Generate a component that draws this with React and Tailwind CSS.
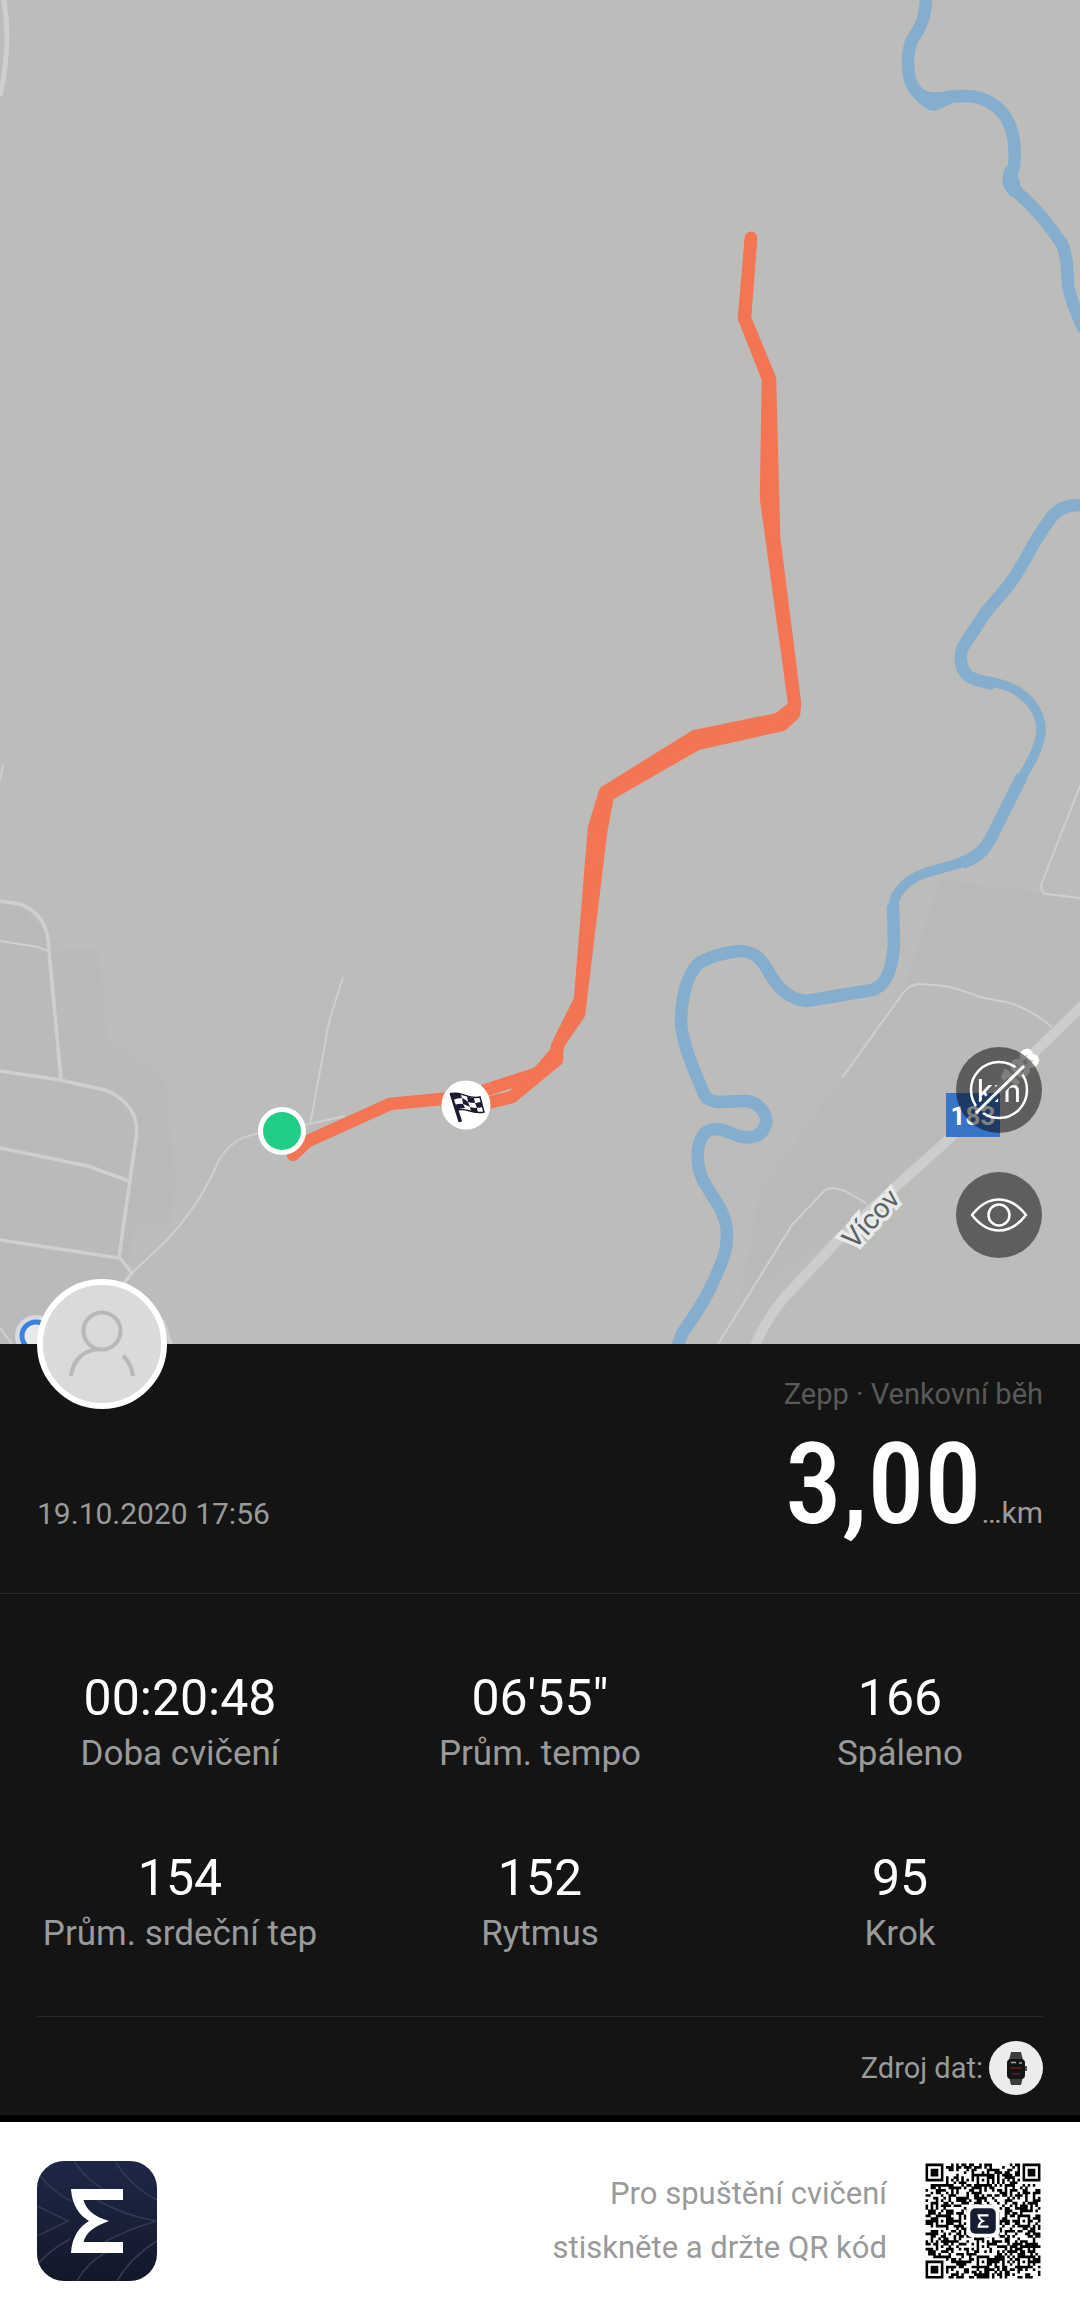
import React from "react";

const stats = [
  { value: "00:20:48", label: "Doba cvičení" },
  { value: "06'55\"", label: "Prům. tempo" },
  { value: "166", label: "Spáleno" },
  { value: "154", label: "Prům. srdeční tep" },
  { value: "152", label: "Rytmus" },
  { value: "95", label: "Krok" },
];

const QR_SIZE = 45;

// Builds the modules of a 45 × 45 code: finders, alignment marks, timing rows and data.
function buildQr() {
  const grid = [];
  let seed = 20201019;
  for (let y = 0; y < QR_SIZE; y++) {
    const row = [];
    for (let x = 0; x < QR_SIZE; x++) {
      seed = (seed * 1103515245 + 12345) % 2147483648;
      row.push((seed >> 16) % 100 < 53);
    }
    grid.push(row);
  }
  for (let i = 8; i < QR_SIZE - 8; i++) {
    grid[6][i] = i % 2 === 0;
    grid[i][6] = i % 2 === 0;
  }
  const ring = (cx, cy, r, lightRings) => {
    for (let y = cy - r; y <= cy + r; y++) {
      for (let x = cx - r; x <= cx + r; x++) {
        if (x < 0 || y < 0 || x >= QR_SIZE || y >= QR_SIZE) continue;
        const d = Math.max(Math.abs(x - cx), Math.abs(y - cy));
        grid[y][x] = !lightRings.includes(d);
      }
    }
  };
  ring(3, 3, 4, [2, 4]);
  ring(QR_SIZE - 4, 3, 4, [2, 4]);
  ring(3, QR_SIZE - 4, 4, [2, 4]);
  [[6, 22], [22, 6], [38, 22], [22, 38], [38, 38]].forEach(([x, y]) => ring(x, y, 2, [1]));
  // Neighbouring dark modules of a row are joined into one bar.
  let d = "";
  grid.forEach((row, y) => {
    let x = 0;
    while (x < QR_SIZE) {
      if (!row[x]) {
        x++;
        continue;
      }
      let end = x;
      while (end < QR_SIZE && row[end]) end++;
      d += `M${x} ${y}H${end}V${y + 1.05}H${x}Z`;
      x = end;
    }
  });
  return d;
}

const qrPath = buildQr();

const SIGMA =
  "M34 28H86V39H46.500C49 49 58 56 72 60C58 65 49 71 46.500 81H86V92H34C35 76 42 66 52 60C42 54 35 44 34 28Z";

function MapView() {
  return (
    <svg viewBox="0 0 1080 1344" className="block w-full bg-[#bcbcbb]" role="img" aria-label="Mapa trasy">
      <g fill="#bababa">
        <path d="M0 905L20 906L44 930L50 950L98 948L108 1040L165 1078L175 1180L170 1225L135 1222L115 1344H0Z" />
        <path d="M940 880L1080 898V1000L1040 1040L950 1130L840 1230L740 1300L760 1190L842 1078L903 993Z" />
      </g>
      <g fill="none" stroke="#cfcfcf" strokeWidth="3.500" strokeLinejoin="round">
        <path d="M4 0C9 30 8 60 0 96" strokeWidth="5" />
        <path d="M0 901L20 904C36 910 46 922 48 940L61 1080" />
        <path d="M0 941L38 947L47 951" strokeWidth="2" />
        <path d="M0 1071L60 1080L105 1090C126 1098 140 1115 136 1138L119 1257L132 1273L123 1284" />
        <path d="M0 1148L88 1166L129 1181M0 1240L119 1258" />
        <path d="M132 1273L165 1242C190 1216 208 1186 219 1160C230 1142 244 1135 262 1133" strokeWidth="2" />
        <path d="M343 977L329 1022L310 1125M300 1126L345 1116" strokeWidth="2" />
        <path d="M3 765L0 780M0 1328L12 1344" strokeWidth="2" />
        <path d="M163 1320L171 1344" />
        <path d="M1080 786L1041 885Q1041 893 1046 894L1080 898" strokeWidth="2" />
        <path d="M842 1078L903 993Q910 984 920 984L945 986Q960 989 980 997L1010 1003Q1032 1010 1052 1027" strokeWidth="2" />
        <path d="M718 1344L792 1225L825 1190Q832 1186 845 1191L866 1203" strokeWidth="2" />
        <path d="M1084 1004L1040 1047L948 1140L892 1190L840 1238L784 1298Q764 1322 754 1348" stroke="#cdcdcd" strokeWidth="10" />
      </g>

      <g fill="none" stroke="#85adce" strokeWidth="12.500" strokeLinejoin="round">
        <path d="M926 -4C926 18 920 28 912 40C907 52 907 66 910 80C916 98 930 101 948 97C976 94 988 98 1002 112C1014 126 1016 148 1014 166C1010 176 1011 186 1019 194C1036 208 1048 224 1062 244C1068 258 1067 272 1068 286Q1072 304 1084 330" />
        <path d="M1084 505C1064 504 1056 510 1048 522C1030 546 1024 566 1008 586L986 612L963 647C959 656 960 668 968 676C978 682 986 682 994 684" />
        <path d="M980 681C1000 682 1014 688 1020 693C1036 704 1044 722 1040 738C1036 758 1024 772 1018 784" strokeWidth="9.500" />
        <path d="M1022 776L998 824C986 850 980 856 962 863" />
        <path d="M968 860C940 870 920 872 908 882C896 892 893 900 893 912" strokeWidth="10" />
        <path d="M893 905L894 945C892 970 886 986 872 990L806 1001C790 999 780 990 771 976C762 958 754 951 738 951C718 954 706 958 698 964C686 976 681 1000 681 1024C684 1050 696 1074 704 1094C710 1106 726 1101 745 1101C758 1101 768 1114 766 1124C762 1138 750 1139 738 1136C720 1128 712 1126 704 1134C696 1144 696 1164 702 1178C712 1198 722 1206 726 1224C730 1246 722 1262 714 1280C704 1304 692 1318 682 1334L676 1350" />
      </g>
      <path d="M906 72L914 98Q924 110 934 111Q944 108 952 103L962 97L925 92Z" fill="#85adce" />
      <path d="M1006 166Q1000 178 1004 188L1010 196L1020 198L1020 180Z" fill="#85adce" />

      <g fill="none" stroke="#f37554" strokeWidth="12.500" strokeLinejoin="round" strokeLinecap="round">
        <path d="M751 238L744 318L768 379L766 498L794 702L794 707L778 719L695 736L605 792L594 828L580 1000L560 1040L556 1052L538 1073L486 1090L462 1097L390 1104L308 1141L293 1155" />
        <path d="M751 238L745 318L770 379L774 537L795 704L794 714L782 725L697 744L608 795L601 832L579 1014L557 1046L557 1060L512 1097L466 1108" />
      </g>
      <path d="M600 797L592 830L575 1004L584 1012L604 830L609 797Z M695 734L778 717L782 727L698 746Z" fill="#f37554" />

      <circle cx="282" cy="1131" r="24" fill="#fff" />
      <circle cx="282" cy="1131" r="19" fill="#20cf85" />

      <circle cx="466" cy="1105" r="24.500" fill="#fff" />
      <g>
        <path d="M450 1093.500L452.500 1093L461.500 1121L459 1122Z" fill="#1b1b30" stroke="#1b1b30" strokeWidth="1" />
        <path d="M451 1094C460 1090 468 1100 480 1097L484 1112C474 1115 466 1107 457 1110Z" fill="#fff" stroke="#1b1b30" strokeWidth="1.500" />
        <path d="M451 1094Q456 1092 460 1093L462 1098Q457 1098 453 1100ZM467 1096Q472 1098 474 1098L475 1103Q471 1103 468 1102ZM462 1098Q465 1099 468 1102L470 1107Q466 1105 463 1104ZM475 1103L481 1102L483 1107L477 1108ZM455 1105Q459 1103 463 1104L465 1108Q460 1108 457 1110ZM470 1107Q473 1108 477 1108L478 1113Q474 1112 471 1111Z" fill="#1b1b30" />
      </g>

      <circle cx="36" cy="1336" r="21" fill="#d7dadf" />
      <circle cx="36" cy="1336" r="14" fill="#e9e9e9" stroke="#3d80e2" strokeWidth="5" />

      <g fontFamily="Roboto, sans-serif">
        <rect x="946" y="1093" width="54" height="44" fill="#3874c8" />
        <text x="973" y="1125" textAnchor="middle" fontSize="26" fontWeight="700" fill="#fff">183</text>
        <text
          transform="translate(1026 1074) rotate(-46)"
          textAnchor="middle" fontSize="24" fontWeight="500" fill="#fff"
          stroke="#fff" strokeWidth="3" strokeLinejoin="round" paintOrder="stroke"
        >183</text>
        <text
          transform="translate(878 1225) rotate(-47)"
          textAnchor="middle" fontSize="28" fill="#5c6264"
          stroke="#e8ebea" strokeWidth="7" paintOrder="stroke"
        >Vícov</text>
      </g>
    </svg>
  );
}

function HideKmIcon() {
  return (
    <svg viewBox="0 0 86 86" className="size-full" aria-hidden="true">
      <mask id="strike">
        <rect width="86" height="86" fill="#fff" />
        <path d="M16 70L72 15" stroke="#000" strokeWidth="10" />
      </mask>
      <g mask="url(#strike)">
        <circle cx="43" cy="43" r="28" fill="none" stroke="#fff" strokeWidth="2.500" />
        <text x="43" y="55" textAnchor="middle" fontFamily="Roboto, sans-serif" fontSize="32" fill="#fff">km</text>
      </g>
      <path d="M20 66L68 19" stroke="#fff" strokeWidth="3" />
    </svg>
  );
}

function EyeIcon() {
  return (
    <svg viewBox="0 0 86 86" className="size-full" fill="none" stroke="#fff" strokeWidth="2.500" strokeLinejoin="round" aria-hidden="true">
      <path d="M16 43Q28 27.500 43 27.500Q58 27.500 70 43Q58 58.500 43 58.500Q28 58.500 16 43Z" />
      <circle cx="43" cy="43" r="10.500" />
    </svg>
  );
}

function Watch() {
  return (
    <svg viewBox="0 0 54 54" className="size-[54px]" role="img" aria-label="Hodinky">
      <circle cx="27" cy="27" r="27" fill="#ececec" />
      <path d="M22 11H32L34 19V36L32 44H22L20 36V19Z" fill="#3a3d3d" />
      <rect x="18" y="18" width="18" height="20" rx="4" fill="#141414" />
      <rect x="36" y="25" width="2" height="5" fill="#555" />
      <path d="M22 21.500H27M30 22H33" stroke="#a8a8a8" strokeWidth="1.500" />
      <path d="M21 27H33M23 33H31" stroke="#5b2424" strokeWidth="1.500" />
    </svg>
  );
}

function Logo() {
  return (
    <svg viewBox="0 0 120 120" className="size-[120px] rounded-[27px]" role="img" aria-label="Zepp">
      <defs>
        <linearGradient id="night" x1="0" y1="0" x2="0" y2="1">
          <stop offset="0" stopColor="#1f2747" />
          <stop offset="1" stopColor="#121829" />
        </linearGradient>
      </defs>
      <rect width="120" height="120" fill="url(#night)" />
      <g fill="none" stroke="#343a53" strokeWidth="1.500">
        <path d="M0 45L31 60L0 75M3 15Q15 30 34 40M37 0Q48 17 66 28M78 0Q92 24 120 39M60 39Q86 54 119 60Q86 70 62 84M0 104Q14 88 33 78M40 120Q50 102 68 92M80 120Q94 96 120 80" />
      </g>
      <path d={SIGMA} fill="#fff" />
    </svg>
  );
}

function QrCode() {
  return (
    <svg viewBox="-1 -1 47 47" className="size-[120px]" role="img" aria-label="QR kód">
      <path d={qrPath} fill="#000" />
      <rect x="16" y="16" width="13" height="13" rx="2.500" fill="#fff" />
      <rect x="17.500" y="17.500" width="10" height="10" rx="2" fill="#161d33" />
      <path d={SIGMA} fill="#fff" transform="translate(17.500 17.500) scale(0.083)" />
    </svg>
  );
}

export default function App() {
  return (
    <main className="w-full bg-black font-[Roboto,sans-serif]">
      <section className="relative">
        <MapView />
        <div className="absolute right-[38px] bottom-[86px] flex flex-col gap-[39px]">
          <button type="button" aria-label="Skrýt kilometry" className="size-[86px] rounded-full bg-black/50">
            <HideKmIcon />
          </button>
          <button type="button" aria-label="Zobrazit mapu" className="size-[86px] rounded-full bg-black/50">
            <EyeIcon />
          </button>
        </div>
      </section>

      <section className="relative bg-[#141414]">
        <div className="absolute -top-[65px] left-[37px] size-[130px] rounded-full border-[6px] border-white bg-[#dadada]">
          <svg viewBox="0 0 118 118" className="size-full" fill="none" stroke="#b8b8b8" strokeWidth="4" role="img" aria-label="Profil">
            <circle cx="59" cy="46" r="18.500" />
            <path d="M28 91C30 74 42 64 58 64M80 71C86 76 89 83 90 91" />
          </svg>
        </div>

        <header className="flex items-end justify-between border-b border-[#292929] px-[37px] pt-8 pb-[49px]">
          <time dateTime="2020-10-19T17:56" className="mb-3 text-[30px] leading-9 text-[#9a9a9a]">19.10.2020 17:56</time>
          <div className="flex flex-col gap-3">
            <h1 className="text-right text-[29px] leading-9 text-[#595959]">Zepp · Venkovní běh</h1>
            <p className="flex items-baseline justify-end text-white">
              <span className="font-['Roboto_Condensed',Roboto,sans-serif] text-[114px] leading-[120px] font-medium">3,00</span>
              <span className="text-[30px] leading-9 text-[#9a9a9a]">…km</span>
            </p>
          </div>
        </header>

        <dl className="grid grid-cols-3 gap-y-[74px] pt-[74px] pb-[62px] text-center">
          {stats.map((s) => (
            <div key={s.label} className="flex flex-col-reverse gap-[6px]">
              <dt className="text-[35px] leading-10 text-[#9a9a9a]">{s.label}</dt>
              <dd className="text-[50px] leading-[60px] text-white">{s.value}</dd>
            </div>
          ))}
        </dl>

        <div className="mx-[37px] flex items-center justify-end gap-[6px] border-t border-[#292929] pt-6 pb-5">
          <span className="text-[29px] leading-9 text-[#9a9a9a]">Zdroj dat:</span>
          <Watch />
        </div>
      </section>

      <footer className="mt-[7px] flex items-center justify-between bg-white px-[37px] py-[39px]">
        <Logo />
        <div className="flex items-center gap-9">
          <p className="text-right text-[31px] leading-[54px] text-[#9a9a9a]">
            Pro spuštění cvičení
            <br />
            stiskněte a držte QR kód
          </p>
          <QrCode />
        </div>
      </footer>
    </main>
  );
}
